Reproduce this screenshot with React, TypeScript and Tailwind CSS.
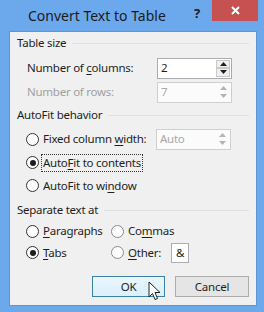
import React from 'react';

const font = { fontFamily: '"Noto Sans", "Open Sans", sans-serif' };

const GroupHeader: React.FC<{ label: string; className?: string }> = ({ label, className }) => (
  <div className={`flex h-[16px] items-center pl-[7px] pr-[7px] ${className || ''}`}>
    <span className="whitespace-nowrap text-[#1e1e1e]">{label}</span>
    <div className="ml-[6px] flex-1 border-t border-[#e0e0e0]" />
  </div>
);

const Arrow: React.FC<{ up?: boolean; disabled?: boolean }> = ({ up, disabled }) => (
  <svg width="7" height="4" viewBox="0 0 7 4">
    <polygon
      points={up ? '0,4 7,4 3.5,0' : '0,0 7,0 3.5,4'}
      fill={disabled ? '#b4b4b4' : '#1e1e1e'}
    />
  </svg>
);

const SpinBox: React.FC<{ value: string; disabled?: boolean }> = ({ value, disabled }) => (
  <div
    className={`flex h-[21px] w-[75px] border ${
      disabled ? 'border-[#cfcfcf] bg-[#fbfbfb]' : 'border-[#abadb3] bg-white'
    }`}
  >
    <div
      className={`flex flex-1 items-center pl-[3px] ${
        disabled ? 'text-[#a8a8a8]' : 'text-[#1e1e1e]'
      }`}
    >
      {value}
    </div>
    <div className="flex w-[16px] flex-col p-[1px]">
      <div
        className={`flex flex-1 items-center justify-center border ${
          disabled ? 'border-transparent' : 'border-[#c9c9c9] bg-[#f0f0f0]'
        }`}
      >
        <Arrow up disabled={disabled} />
      </div>
      <div
        className={`flex flex-1 items-center justify-center border ${
          disabled ? 'border-transparent' : 'border-[#c9c9c9] bg-[#f0f0f0]'
        }`}
      >
        <Arrow disabled={disabled} />
      </div>
    </div>
  </div>
);

const Radio: React.FC<{ checked?: boolean; light?: boolean }> = ({ checked, light }) => (
  <div
    className={`flex h-[13px] w-[13px] shrink-0 items-center justify-center rounded-full border bg-white ${
      light ? 'border-[#8a8a8a]' : 'border-[#333333]'
    }`}
  >
    {checked && <div className="h-[6px] w-[6px] rounded-full bg-[#1e1e1e]" />}
  </div>
);

const U: React.FC<{ children: React.ReactNode }> = ({ children }) => (
  <span className="underline underline-offset-[2px]">{children}</span>
);

export default function App() {
  return (
    <div
      className="relative flex h-[312px] w-[264px] flex-col overflow-hidden bg-[#6ba9ec]"
      style={font}
    >
      {/* title bar */}
      <div className="relative flex h-[31px] items-center">
        <span className="ml-[28px] text-[14px] text-[#1b1b1b]">Convert Text to Table</span>
        <span className="absolute left-[194px] top-[4px] text-[13px] font-bold text-[#1b1b1b]">?</span>
        <div className="absolute left-[212px] top-0 flex h-[21px] w-[46px] items-center justify-center bg-[#c75050]">
          <svg width="9" height="9" viewBox="0 0 9 9">
            <path d="M1 1 L8 8 M8 1 L1 8" stroke="white" strokeWidth="2" />
          </svg>
        </div>
      </div>

      {/* body */}
      <div className="ml-[9px] mr-[7px] flex h-[275px] flex-col border border-[#5d95d0] bg-[#f0f0f0] text-[11.5px] tracking-[-0.25px] text-[#1e1e1e]">
        <GroupHeader label="Table size" className="mt-[3px]" />

        <div className="mt-[5px] flex h-[24px] items-center pl-[17px]">
          <span className="w-[130px]">
            Number of <U>c</U>olumns:
          </span>
          <SpinBox value="2" />
        </div>
        <div className="flex h-[24px] items-center pl-[17px]">
          <span className="w-[130px] text-[#a0a0a0]">Number of rows:</span>
          <SpinBox value="7" disabled />
        </div>

        <GroupHeader label="AutoFit behavior" className="mt-[3px]" />

        <div className="mt-[4px] flex h-[24px] items-center pl-[16px]">
          <Radio />
          <span className="ml-[4px] w-[113px]">
            Fixed column <U>w</U>idth:
          </span>
          <SpinBox value="Auto" disabled />
        </div>
        <div className="flex h-[23px] items-center pl-[16px]">
          <Radio checked />
          <span className="ml-[2px] border border-dotted border-[#333] px-[1px] leading-[16px]">
            Auto<U>F</U>it to contents
          </span>
        </div>
        <div className="flex h-[23px] items-center pl-[16px]">
          <Radio />
          <span className="ml-[4px]">
            AutoFit to wi<U>n</U>dow
          </span>
        </div>

        <GroupHeader label="Separate text at" className="mt-[5px]" />

        <div className="mt-[2px] flex h-[22px] items-center pl-[16px]">
          <Radio />
          <span className="ml-[4px] w-[68px]">
            <U>P</U>aragraphs
          </span>
          <Radio light />
          <span className="ml-[4px]">
            Co<U>m</U>mas
          </span>
        </div>
        <div className="flex h-[21px] items-center pl-[16px]">
          <Radio checked />
          <span className="ml-[4px] w-[68px]">
            <U>T</U>abs
          </span>
          <Radio light />
          <span className="ml-[4px] w-[43px]">
            <U>O</U>ther:
          </span>
          <div className="flex h-[20px] w-[18px] items-center justify-center border border-[#abadb3] bg-white">
            &amp;
          </div>
        </div>

        <div className="mt-[13px] flex h-[21px] pl-[82px]">
          <div className="flex w-[73px] items-center justify-center border border-[#3c7fb1] bg-gradient-to-b from-[#eaf6fd] to-[#d9f0fc]">
            OK
          </div>
          <div className="ml-[10px] flex w-[74px] items-center justify-center border border-[#acacac] bg-[#e5e5e5]">
            Cancel
          </div>
        </div>
      </div>

      {/* mouse pointer */}
      <svg
        className="absolute left-[148px] top-[281px]"
        width="13"
        height="20"
        viewBox="0 0 13 20"
      >
        <path
          d="M1 1 L1 16 L4.5 12.5 L7 18.5 L9.5 17.5 L7 11.5 L12 11.5 Z"
          fill="white"
          stroke="#222"
          strokeWidth="1"
          strokeLinejoin="round"
        />
      </svg>
    </div>
  );
}
